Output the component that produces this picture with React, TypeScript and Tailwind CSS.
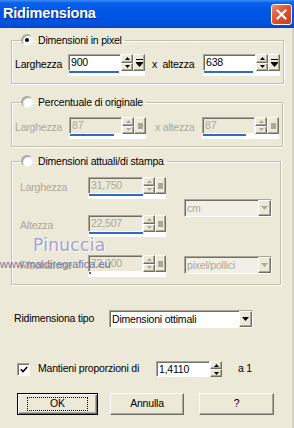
import React from 'react'

const font = "font-['Liberation_Sans',Arial,sans-serif]"
const sunk =
  'border border-t-[#aca899] border-l-[#aca899] border-r-white border-b-white shadow-[inset_1px_1px_0_#716f64]'
const raised =
  'border border-t-white border-l-white border-r-[#716f64] border-b-[#716f64] shadow-[inset_-1px_-1px_0_#aca899] bg-[#ece9d8]'
const grey = 'text-[#aca899]'

const Tri = ({up, disabled, w = 5}: {up?: boolean; disabled?: boolean; w?: number}) => (
  <svg width={w} height={Math.ceil(w / 2)} viewBox={`0 0 ${w} ${Math.ceil(w / 2)}`}>
    <polygon
      points={up ? `0,${Math.ceil(w / 2)} ${w},${Math.ceil(w / 2)} ${w / 2},0` : `0,0 ${w},0 ${w / 2},${Math.ceil(w / 2)}`}
      fill={disabled ? '#aca899' : '#000'}
    />
  </svg>
)

const SpinBtns = ({disabled}: {disabled?: boolean}) => (
  <div className="flex flex-col w-[12px]">
    <div className={`${raised} h-1/2 flex items-center justify-center`}>
      <Tri up disabled={disabled} />
    </div>
    <div className={`${raised} h-1/2 flex items-center justify-center`}>
      <Tri disabled={disabled} />
    </div>
  </div>
)

const SeekBtn = ({disabled, w = 'w-[12px]'}: {disabled?: boolean; w?: string}) => (
  <div className={`${raised} ${w} flex items-center justify-center`}>
    {disabled ? (
      <div className="w-[5px] h-[6px] bg-[#aca899]" />
    ) : (
      <svg width="7" height="8" viewBox="0 0 7 8">
        <rect x="0" y="0" width="7" height="1" fill="#000" />
        <rect x="0" y="3" width="7" height="1" fill="#000" />
        <polygon points="0,4 7,4 3.5,8" fill="#000" />
      </svg>
    )}
  </div>
)

type NumProps = {
  value: string
  bar: number
  disabled?: boolean
  box?: string
  seekW?: string
}

const NumBox = ({value, bar, disabled, box = 'w-[53px]', seekW}: NumProps) => (
  <div className="flex flex-col w-fit">
    <div className="flex h-[17px]">
      <div
        className={`${sunk} ${box} ${disabled ? 'bg-[#ece9d8] ' + grey : 'bg-white text-black'} flex items-center pl-[2px] leading-none`}
      >
        {value}
      </div>
      <SpinBtns disabled={disabled} />
      <SeekBtn disabled={disabled} w={seekW} />
    </div>
    <div className="h-[5px] bg-white pl-[1px]">
      <div className="h-[2px] bg-[#316ac5]" style={{width: bar}} />
    </div>
  </div>
)

const Combo = ({value, disabled, w}: {value: string; disabled?: boolean; w: string}) => (
  <div className={`${sunk} ${w} h-[18px] flex ${disabled ? 'bg-[#f1efe6] ' + grey : 'bg-white text-black'}`}>
    <div className="flex-1 flex items-center pl-[2px] leading-none">{value}</div>
    <div className={`${raised} w-[13px] flex items-center justify-center`}>
      <Tri disabled={disabled} w={7} />
    </div>
  </div>
)

const Radio = ({checked}: {checked?: boolean}) => (
  <div className="w-[12px] h-[12px] rounded-full bg-white border border-t-[#aca899] border-l-[#aca899] border-r-[#f4f3ee] border-b-[#f4f3ee] shadow-[inset_1px_1px_1px_#9e9a8c] flex items-center justify-center">
    {checked && <div className="w-[4px] h-[4px] rounded-full bg-black" />}
  </div>
)

const Group = ({title, checked, className, children}: {title: string; checked?: boolean; className: string; children: React.ReactNode}) => (
  <fieldset
    className={`border border-[#c2bfae] shadow-[inset_1px_1px_0_#fff,1px_1px_0_#fff] px-[3px] ${className}`}
  >
    <legend className="ml-[6px] pr-[3px] h-[14px] flex items-center gap-[5px]">
      <Radio checked={checked} />
      <span className="text-black leading-none">{title}</span>
    </legend>
    {children}
  </fieldset>
)

const Btn = ({label, w, def}: {label: string; w: string; def?: boolean}) => (
  <div
    className={`${w} h-[22px] flex items-center justify-center ${
      def
        ? 'border border-black bg-[#ece9d8] shadow-[inset_1px_1px_0_#fff,inset_-1px_-1px_0_#716f64,inset_-2px_-2px_0_#aca899]'
        : raised
    }`}
  >
    <div className={`flex items-center justify-center ${def ? 'border border-dotted border-black px-[22px] h-[14px]' : ''}`}>
      {label}
    </div>
  </div>
)

export default function App() {
  return (
    <div className={`w-[294px] h-[428px] bg-[#ece9d8] ${font} text-[10.5px] tracking-[-0.2px] overflow-hidden flex flex-col`}>
      {/* title bar */}
      <div className="h-[28px] shrink-0 flex items-center justify-between pl-[3px] pr-[2px] bg-[linear-gradient(180deg,#3d8ff8_0%,#0a61ea_10%,#0055e5_45%,#0052e0_85%,#0044c8_100%)]">
        <span className="text-white font-bold text-[14.5px] tracking-[-0.2px] [text-shadow:1px_1px_0_#0a2a80]">
          Ridimensiona
        </span>
        <div className="w-[21px] h-[21px] rounded-[3px] border border-white bg-[linear-gradient(135deg,#f08a6c_0%,#e0532f_45%,#c8401e_100%)] flex items-center justify-center">
          <svg width="11" height="11" viewBox="0 0 11 11">
            <path d="M1.5 1.5 L9.5 9.5 M9.5 1.5 L1.5 9.5" stroke="#fff" strokeWidth="2.2" strokeLinecap="round" />
          </svg>
        </div>
      </div>

      {/* body */}
      <div className="relative flex-1 flex flex-col px-[11px] border-r-2 border-r-[#d6d2c2]">
        <Group title="Dimensioni in pixel" checked className="mt-[5px] pb-[7px]">
          <div className="mt-[7px] flex items-start">
            <span className="w-[53px] mt-[3px]">Larghezza</span>
            <NumBox value="900" bar={50} />
            <span className="ml-[7px] w-[51px] mt-[3px] whitespace-pre">x  altezza</span>
            <NumBox value="638" bar={49} />
          </div>
        </Group>

        <Group title="Percentuale di originale" className="mt-[11px] pb-[7px]">
          <div className={`mt-[8px] flex items-start ${grey}`}>
            <span className="w-[54px] mt-[3px]">Larghezza</span>
            <NumBox value="87" bar={44} disabled />
            <span className="ml-[9px] w-[47px] mt-[3px]">x altezza</span>
            <NumBox value="87" bar={43} disabled />
          </div>
        </Group>

        <Group title="Dimensioni attuali/di stampa" className="mt-[7px] pb-[7px]">
          <div className={`mt-[9px] flex ${grey}`}>
            <div className="flex flex-col pl-[5px]">
              <div className="flex items-start">
                <span className="w-[68px] mt-[3px]">Larghezza</span>
                <NumBox value="31,750" bar={54} disabled box="w-[55px]" seekW="w-[11px]" />
              </div>
              <div className="flex items-start mt-[16px]">
                <span className="w-[68px] mt-[3px]">Altezza</span>
                <NumBox value="22,507" bar={54} disabled box="w-[55px]" seekW="w-[11px]" />
              </div>
              <div className="flex items-start mt-[18px]">
                <span className="w-[68px] mt-[3px]">Risoluzione</span>
                <NumBox value="72,000" bar={2} disabled box="w-[55px]" seekW="w-[11px]" />
              </div>
            </div>
            <div className="flex flex-col ml-[18px] pt-[22px]">
              <Combo value="cm" disabled w="w-[88px]" />
              <div className="mt-[39px]">
                <Combo value="pixel/pollici" disabled w="w-[88px]" />
              </div>
            </div>
          </div>
        </Group>

        <div className="mt-[25px] flex items-center pl-[3px]">
          <span className="w-[95px]">Ridimensiona tipo</span>
          <Combo value="Dimensioni ottimali" w="w-[144px]" />
        </div>

        <div className="mt-[33px] flex items-center pl-[6px]">
          <div className={`${sunk} bg-white w-[13px] h-[13px] flex items-center justify-center`}>
            <svg width="8" height="7" viewBox="0 0 8 7">
              <path d="M0.8 3.3 L3 5.6 L7.2 1" stroke="#000" strokeWidth="1.6" fill="none" />
            </svg>
          </div>
          <span className="ml-[8px] w-[118px]">Mantieni proporzioni di</span>
          <div className="flex h-[16px]">
            <div className={`${sunk} bg-white w-[54px] flex items-center pl-[2px] leading-none`}>1,4110</div>
            <SpinBtns />
          </div>
          <span className="ml-[16px]">a 1</span>
        </div>

        <div className="mt-[16px] flex pl-[6px]">
          <Btn label="OK" w="w-[81px]" def />
          <div className="ml-[12px]">
            <Btn label="Annulla" w="w-[74px]" />
          </div>
          <div className="ml-[15px]">
            <Btn label="?" w="w-[75px]" />
          </div>
        </div>

        {/* watermark */}
        <div className="absolute left-[33px] top-[209px] font-['DejaVu_Sans',sans-serif] text-[17px] tracking-[0.3px] text-[#a2a2d6] [text-shadow:1px_1px_0_#fff] leading-none">
          Pinuccia
        </div>
        <div className="absolute left-0 top-[231px] font-['Liberation_Sans',sans-serif] text-[11px] tracking-[0px] text-[#7474a4] leading-none">
          www.maidiregrafica.eu
        </div>
      </div>
    </div>
  )
}
